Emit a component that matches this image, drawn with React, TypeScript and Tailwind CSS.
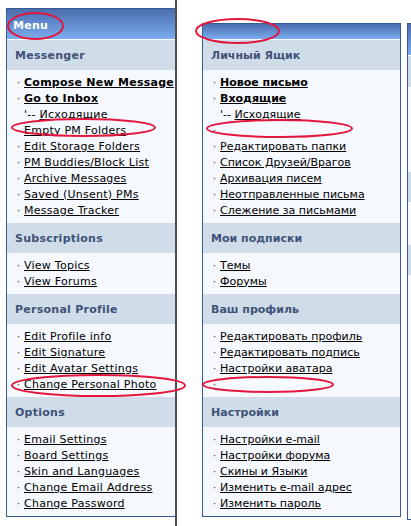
import React from "react";

type Item = { t: string; bold?: boolean; sub?: boolean };
type Section = { title: string; items: Item[] };

const it = (t: string, bold = false): Item => ({ t, bold });
const sub = (t: string): Item => ({ t, sub: true });

const left: Section[] = [
  {
    title: "Messenger",
    items: [
      it("Compose New Message", true),
      it("Go to Inbox", true),
      sub("Исходящие"),
      it("Empty PM Folders"),
      it("Edit Storage Folders"),
      it("PM Buddies/Block List"),
      it("Archive Messages"),
      it("Saved (Unsent) PMs"),
      it("Message Tracker"),
    ],
  },
  { title: "Subscriptions", items: [it("View Topics"), it("View Forums")] },
  {
    title: "Personal Profile",
    items: [
      it("Edit Profile info"),
      it("Edit Signature"),
      it("Edit Avatar Settings"),
      it("Change Personal Photo"),
    ],
  },
  {
    title: "Options",
    items: [
      it("Email Settings"),
      it("Board Settings"),
      it("Skin and Languages"),
      it("Change Email Address"),
      it("Change Password"),
    ],
  },
];

const right: Section[] = [
  {
    title: "Личный Ящик",
    items: [
      it("Новое письмо", true),
      it("Входящие", true),
      sub("Исходящие"),
      it(""),
      it("Редактировать папки"),
      it("Список Друзей/Врагов"),
      it("Архивация писем"),
      it("Неотправленные письма"),
      it("Слежение за письмами"),
    ],
  },
  { title: "Мои подписки", items: [it("Темы"), it("Форумы")] },
  {
    title: "Ваш профиль",
    items: [
      it("Редактировать профиль"),
      it("Редактировать подпись"),
      it("Настройки аватара"),
      it(""),
    ],
  },
  {
    title: "Настройки",
    items: [
      it("Настройки e-mail"),
      it("Настройки форума"),
      it("Скины и Языки"),
      it("Изменить e-mail адрес"),
      it("Изменить пароль"),
    ],
  },
];

function Row({ item }: { item: Item }) {
  if (item.sub) {
    return (
      <div className="flex h-[16px] items-center pl-[17px] whitespace-pre">
        <span>{"'-- "}</span>
        <span className="underline">{item.t}</span>
      </div>
    );
  }
  return (
    <div className="flex h-[16px] items-center pl-[8px] whitespace-pre">
      <span className="w-[7px] text-center text-[#444]">·</span>
      <span className="w-[2px]" />
      <span className={item.bold ? "font-bold underline" : "underline"}>{item.t}</span>
    </div>
  );
}

function Panel({
  sections,
  headerH,
  title,
  width,
  tracking,
}: {
  sections: Section[];
  headerH: string;
  title?: string;
  width: string;
  tracking: string;
}) {
  return (
    <div className={`${width} ${tracking} shrink-0 border border-[#365a93] bg-[#f5f8fd]`}>
      <div
        className={`${headerH} flex items-center border-b border-white bg-gradient-to-b from-[#4b6dae] to-[#7badf0] pl-[6px] pt-[2px] font-bold text-white`}
      >
        {title}
      </div>
      {sections.map((s) => (
        <div key={s.title}>
          <div className="flex h-[30px] items-center bg-[#d1dce9] pl-[8px] font-bold text-[#3d5377]">
            {s.title}
          </div>
          <div className="pt-[4px] pb-[5px] text-black">
            {s.items.map((i, k) => (
              <Row key={k} item={i} />
            ))}
          </div>
        </div>
      ))}
    </div>
  );
}

export default function App() {
  return (
    <div className="relative flex h-[526px] w-[411px] overflow-hidden bg-white font-['DejaVu_Sans',Verdana,sans-serif] text-[11px] leading-none">
      <div className="w-[175px] shrink-0 overflow-hidden pl-[6px] pt-[8px]">
        <Panel
          sections={left}
          headerH="h-[31px]"
          title="Menu"
          width="w-[190px]"
          tracking="tracking-[0.25px]"
        />
      </div>
      <div className="w-[2px] shrink-0 bg-[#4e4e4e]" />
      <div className="w-[25px] shrink-0" />
      <div className="pt-[23px]">
        <Panel sections={right} headerH="h-[16px]" width="w-[199px]" tracking="tracking-normal" />
      </div>
      <div className="w-[6px] shrink-0" />
      <div className="flex-1 pt-[23px]">
        <div className="h-[497px] border border-r-0 border-[#365a93] bg-[#f5f8fd]">
          <div className="h-[32px] border-b border-white bg-gradient-to-b from-[#4b6dae] to-[#7badf0]" />
          <div className="h-[31px] bg-[#d1dce9]" />
          <div className="h-[85px]" />
          <div className="h-[30px] bg-[#d1dce9]" />
          <div className="h-[43px]" />
          <div className="h-[30px] bg-[#d1dce9]" />
        </div>
      </div>
      <svg
        className="pointer-events-none absolute inset-0"
        width="411"
        height="526"
        viewBox="0 0 411 526"
        fill="none"
        stroke="#e3173d"
        strokeWidth="2"
      >
        <ellipse cx="35.5" cy="26" rx="27.5" ry="13" />
        <ellipse cx="83.5" cy="127.5" rx="71.5" ry="8.5" />
        <ellipse cx="237.5" cy="31" rx="41.5" ry="12" />
        <ellipse cx="279.5" cy="128.5" rx="72.5" ry="8.5" />
        <ellipse cx="98.5" cy="385.5" rx="86.5" ry="10.5" />
        <ellipse cx="268" cy="384.5" rx="65" ry="7.5" />
      </svg>
    </div>
  );
}
